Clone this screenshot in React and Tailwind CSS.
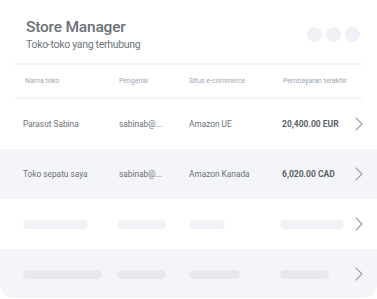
import { ChevronRight } from 'lucide-react';

const rows = [
    { name: "Parasut Sabina", id: "sabinab@...", site: "Amazon UE", amount: "20,400.00 EUR" },
    { name: "Toko sepatu saya", id: "sabinab@...", site: "Amazon Kanada", amount: "6,020.00 CAD" },
];

const skeletons = [
    ["w-[65px]", "w-[49px]", "w-[36px]", "w-[64px]"],
    ["w-[79px]", "w-[49px]", "w-[51px]", "w-[49px]"],
];

const cols = "grid grid-cols-[96px_70px_93px_1fr_auto] items-center pl-[23px] pr-[6px]";

const App = () => {
    return (
        <div className="w-[377px] h-[299px] bg-white overflow-hidden" style={{ fontFamily: 'Roboto, "Liberation Sans", sans-serif' }}>
            <div className="bg-white rounded-b-[14px] overflow-hidden h-[298px]">
                <div className="flex items-start justify-between pl-[26px] pr-[17px] pt-[19px] h-[63px]">
                    <div>
                        <h1 className="text-[15.5px] leading-[16px] font-medium text-[#6b7079] tracking-[-0.2px]">Store Manager</h1>
                        <p className="mt-[4px] text-[10.5px] leading-[12px] text-[#6f747c] tracking-[-0.3px]">Toko-toko yang terhubung</p>
                    </div>
                    <div className="flex gap-[4px] mt-[8px]">
                        <span className="w-[15px] h-[15px] rounded-full bg-[#eff1f6]" />
                        <span className="w-[15px] h-[15px] rounded-full bg-[#eff1f6]" />
                        <span className="w-[15px] h-[15px] rounded-full bg-[#eff1f6]" />
                    </div>
                </div>

                <div className="mx-[15px] h-[2px] bg-[#f3f4f8]" />
                <div className={`${cols} h-[32px] text-[7px] text-[#9ca6b3] whitespace-nowrap`}>
                    <span className="pl-[2px]">Nama toko</span>
                    <span>Pengenal</span>
                    <span>Situs e-commerce</span>
                    <span className="pl-[1px]">Pembayaran terakhir</span>
                    <span className="w-6" />
                </div>
                <div className="mx-[15px] h-[2px] bg-[#f3f4f8]" />

                {rows.map((row, i) => (
                    <div key={i} className={`${cols} h-[50px] text-[8.3px] text-[#6b7079] whitespace-nowrap ${i % 2 ? 'bg-[#f4f5f8]' : 'bg-white'}`}>
                        <span>{row.name}</span>
                        <span>{row.id}</span>
                        <span>{row.site}</span>
                        <span className="text-[8.5px] font-bold text-[#5b6068]">{row.amount}</span>
                        <ChevronRight className="w-6 h-6 text-[#9a9ea5]" strokeWidth={1.1} />
                    </div>
                ))}

                {skeletons.map((bars, i) => (
                    <div key={i} className={`${cols} pl-[21px] h-[50px] ${i % 2 ? 'bg-[#f4f5f8]' : 'bg-white'}`}>
                        {bars.map((w, j) => (
                            <span key={j} className={`${w} h-[9px] rounded-full ${i % 2 ? 'bg-[#e8e9ed]' : 'bg-[#f1f2f5]'} ${j === 1 ? '-ml-[2px]' : ''} ${j === 3 ? '-ml-[2px]' : ''}`} />
                        ))}
                        <ChevronRight className="w-6 h-6 text-[#9a9ea5]" strokeWidth={1.1} />
                    </div>
                ))}
            </div>
        </div>
    );
};

export default App;
